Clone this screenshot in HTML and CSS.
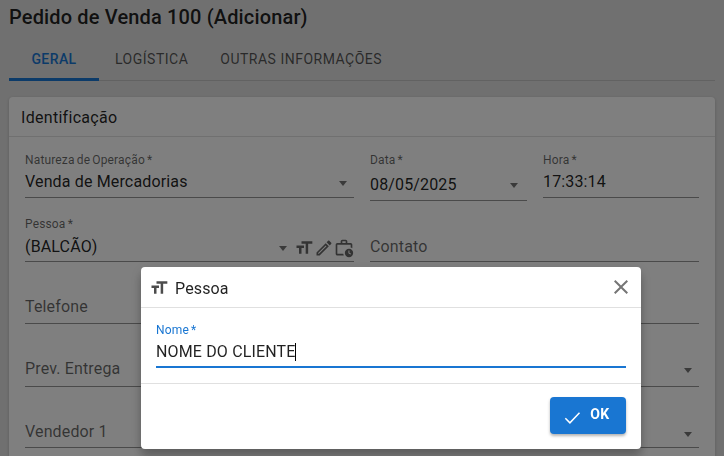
FILE: index.html
```html
<!DOCTYPE html>
<html lang="pt">
<head>
<meta charset="utf-8">
<title>Pedido de Venda</title>
<link rel="stylesheet" href="styles.css">
</head>
<body>
<main class="page">
  <h1 class="title">Pedido de Venda 100 (Adicionar)</h1>
  <nav class="tabs">
    <span class="tab active">GERAL</span>
    <span class="tab">LOGÍSTICA</span>
    <span class="tab">OUTRAS INFORMAÇÕES</span>
  </nav>
  <section class="card">
    <h2 class="card-title">Identificação</h2>
    <div class="form">
      <div class="row row1">
        <div class="field w-wide"><label>Natureza de Operação *</label><div class="value"><span>Venda de Mercadorias</span><i class="caret"></i></div></div>
        <div class="field w-half data"><label>Data *</label><div class="value"><span>08/05/2025</span><i class="caret"></i></div></div>
        <div class="field w-half hora"><label>Hora *</label><div class="value"><span>17:33:14</span></div></div>
      </div>
      <div class="row row2">
        <div class="field w-wide"><label>Pessoa *</label><div class="value"><span>(BALCÃO)</span><i class="caret"></i>
          <svg class="ico" viewBox="0 0 24 24"><path d="M9 4v3h5v12h3V7h5V4H9zm-6 8h3v7h3v-7h3V9H3v3z"/></svg>
          <svg class="ico" viewBox="0 0 24 24"><path d="M3 17.25V21h3.75L17.81 9.94l-3.75-3.75L3 17.25zM5.92 19H5v-.92l9.06-9.06.92.92L5.92 19zM20.71 5.63l-2.34-2.34c-.2-.2-.45-.29-.71-.29s-.51.1-.7.29l-1.83 1.83 3.75 3.75 1.83-1.83c.39-.39.39-1.02 0-1.41z"/></svg>
          <svg class="ico" viewBox="0 0 24 24"><path d="M10 2h4c1.1 0 2 .9 2 2v2h4c1.1 0 2 .9 2 2v4.2a6 6 0 0 0-2-.9V8H4v11h7.1c.1.7.4 1.4.7 2H4c-1.1 0-2-.9-2-2V8c0-1.1.9-2 2-2h4V4c0-1.1.9-2 2-2zm0 2v2h4V4h-4z"/><path fill-rule="evenodd" d="M18 13a5 5 0 1 1 0 10 5 5 0 0 1 0-10zm-.7 2v3.4l2.5 1.5.7-1-2-1.2V15h-1.2z"/></svg>
        </div></div>
        <div class="field w-full"><div class="placeholder">Contato</div></div>
      </div>
      <div class="row row3">
        <div class="field w-wide"><div class="placeholder">Telefone</div></div>
        <div class="field w-full"></div>
      </div>
      <div class="row row4">
        <div class="field w-wide"><div class="placeholder">Prev. Entrega</div></div>
        <div class="field w-full"><div class="value right"><i class="caret"></i></div></div>
      </div>
      <div class="row row5">
        <div class="field w-wide"><div class="placeholder">Vendedor 1</div></div>
        <div class="field w-full"><div class="value right"><i class="caret"></i></div></div>
      </div>
    </div>
  </section>
</main>
<div class="scrim"></div>
<div class="dialog">
  <header class="dlg-head">
    <svg class="dlg-ico" viewBox="0 0 24 24"><path d="M9 4v3h5v12h3V7h5V4H9zm-6 8h3v7h3v-7h3V9H3v3z"/></svg>
    <span class="dlg-title">Pessoa</span>
    <svg class="dlg-close" viewBox="0 0 24 24"><path d="M19 6.41 17.59 5 12 10.59 6.41 5 5 6.41 10.59 12 5 17.59 6.41 19 12 13.41 17.59 19 19 17.59 13.41 12 19 6.41z"/></svg>
  </header>
  <div class="dlg-body">
    <label class="dlg-label">Nome *</label>
    <div class="dlg-input"><span>NOME DO CLIENTE</span><i class="cursor"></i></div>
  </div>
  <footer class="dlg-foot">
    <button class="ok" type="button">
      <svg class="ok-ico" viewBox="0 0 24 24"><path d="M4 13.5 9.5 19 21 7"/></svg>
      <span>OK</span>
    </button>
  </footer>
</div>
</body>
</html>
```
FILE: styles.css
```css
* { box-sizing: border-box; }
html, body { margin: 0; height: 100%; overflow: hidden; }
body { background: #e0e0e0; font-family: Roboto, "Liberation Sans", sans-serif; color: rgba(0,0,0,.87); }
.page { padding: 0 9px; }
.title { margin: 0; height: 37px; padding-top: 5px; font-size: 20px; line-height: 24px; font-weight: 500; letter-spacing: .15px; }
.tabs { display: flex; height: 44px; border-bottom: 1px solid rgba(0,0,0,.12); }
.tab { height: 44px; padding: 0 16px 1px; display: flex; align-items: center; font-size: 14px; font-weight: 400; letter-spacing: .5px; color: rgba(0,0,0,.65); }
.tab.active { width: 90px; justify-content: center; font-weight: 500; letter-spacing: .4px; color: #1976d2; border-bottom: 3px solid #1976d2; padding-top: 2px; padding-bottom: 0; }
.card { margin-top: 16px; width: 706px; height: 359px; background: #fff; border-radius: 4px 4px 0 0; box-shadow: 0 1px 3px rgba(0,0,0,.2); }
.card-title { margin: 0; height: 40px; padding: 0 12px; border-bottom: 1px solid rgba(0,0,0,.12); font-size: 16px; font-weight: 400; line-height: 41px; letter-spacing: .3px; }
.form { padding: 0 16px; }
.row { display: flex; gap: 16px; align-items: flex-start; }
.row1, .row2, .row3, .row4, .row5 { margin-top: 16px; }
.field { height: 45px; border-bottom: 1px solid rgba(0,0,0,.42); position: relative; }
.row3 .field { height: 46px; }
.row4 .field { height: 47px; }
.row5 .field { height: 45px; }
.w-wide, .w-full { width: 329px; }
.w-half { width: 156px; }
.field.data { width: 157px; height: 48px; }
.field label { display: block; font-size: 12px; line-height: 14px; letter-spacing: .15px; word-spacing: -1px; color: rgba(0,0,0,.6); }
.value { display: flex; align-items: center; height: 28px; margin-top: 1px; font-size: 16px; letter-spacing: .15px; }
.value > span { flex: 1; }
.row1 .value { margin-top: 0; }
.row1 .data .value { margin-top: 3px; }
.caret { width: 0; height: 0; margin-top: 4px; margin-right: 7px; border-left: 4.5px solid transparent; border-right: 4.5px solid transparent; border-top: 5px solid rgba(0,0,0,.54); }
.row1 .caret { margin-top: 5px; }
.row1 .data .caret { margin-top: 2px; margin-right: 9px; }
.value.right { justify-content: flex-end; height: 100%; margin: 0; }
.value.right .caret { margin-top: 0; }
.row4 .value.right { padding-top: 14px; }
.row5 .value.right { padding-top: 18px; }
.ico { width: 20px; height: 20px; margin-top: 4px; fill: rgba(0,0,0,.6); flex: none; }
.placeholder { position: absolute; left: 0; bottom: 4px; font-size: 16px; line-height: 24px; letter-spacing: .15px; color: rgba(0,0,0,.6); }
.row2 .placeholder { bottom: 2px; }
.row4 .placeholder { bottom: 5px; }
.row5 .placeholder { bottom: 3px; }
.scrim { position: fixed; inset: 0; background: rgba(0,0,0,.5); }
.dialog { position: fixed; left: 141px; top: 267px; width: 500px; height: 182px; background: #fff; border-radius: 4px; box-shadow: 0 8px 10px rgba(0,0,0,.2), 0 3px 14px rgba(0,0,0,.12); }
.dlg-head { display: flex; align-items: center; height: 41px; padding: 2px 8px 0; border-bottom: 1px solid #e0e0e0; }
.dlg-ico { width: 20px; height: 20px; fill: rgba(0,0,0,.7); }
.dlg-title { flex: 1; margin-left: 6px; font-size: 16px; letter-spacing: .15px; color: rgba(0,0,0,.87); }
.dlg-close { width: 24px; height: 24px; margin-top: -2px; fill: #757575; }
.dlg-body { height: 76px; padding: 15px 15px 0; border-bottom: 1px solid #e0e0e0; }
.dlg-label { display: block; font-size: 12px; line-height: 14px; letter-spacing: .15px; word-spacing: -1px; color: #1976d2; }
.dlg-input { display: flex; align-items: center; height: 31px; border-bottom: 2px solid #1976d2; font-size: 16px; letter-spacing: .15px; }
.cursor { display: block; width: 1px; height: 18px; background: #000; }
.dlg-foot { display: flex; justify-content: flex-end; padding: 13px 15px 0; }
.ok { display: flex; align-items: center; justify-content: center; gap: 8px; width: 76px; height: 37px; padding: 0 4px 0 0; border: 0; border-radius: 4px; background: #1976d2; color: #fff; font: 700 14px Roboto, "Liberation Sans", sans-serif; letter-spacing: .4px; box-shadow: 0 2px 3px rgba(0,0,0,.3); }
.ok-ico { width: 20px; height: 20px; fill: none; stroke: #fff; stroke-width: 1.8; margin-top: 3px; }
.ok span { margin-top: -3px; }
```
